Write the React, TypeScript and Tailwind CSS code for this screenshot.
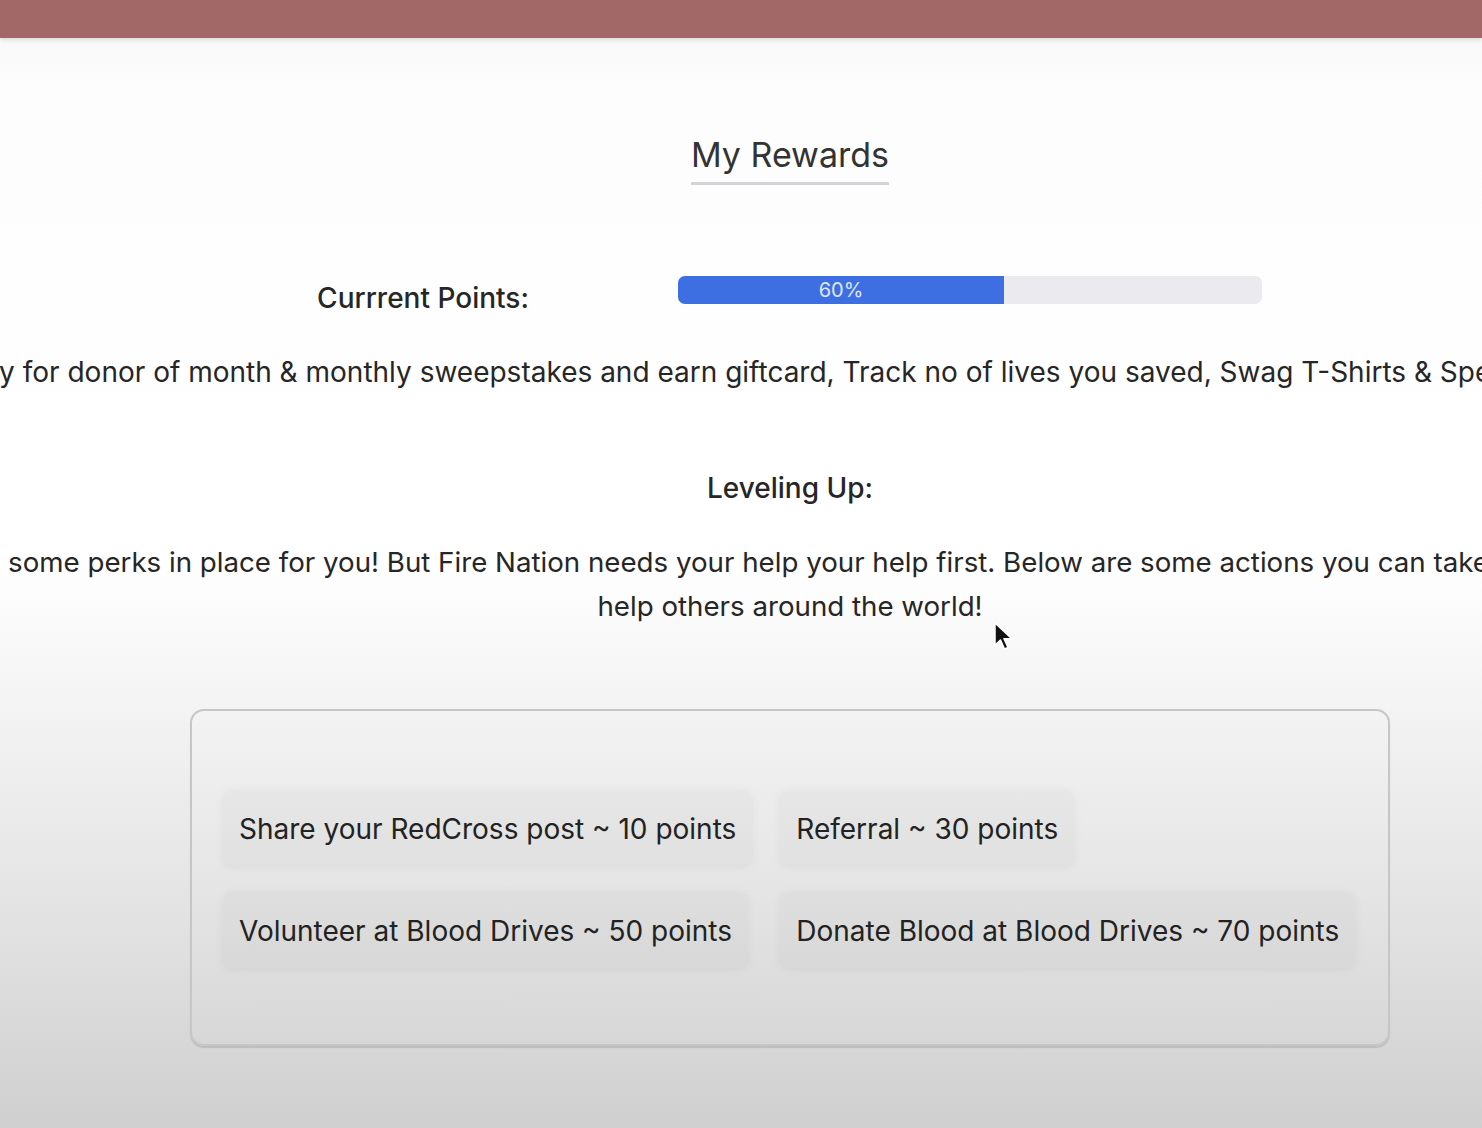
import React from "react";

const actions = [
  "Share your RedCross post ~ 10 points",
  "Referral ~ 30 points",
  "Volunteer at Blood Drives ~ 50 points",
  "Donate Blood at Blood Drives ~ 70 points",
];

const Cursor = () => (
  <svg width="22" height="30" viewBox="0 0 22 30" className="absolute left-[993px] top-[622px]">
    <path d="M2 1 L2 23 L7.5 18 L11.5 27 L15 25.5 L11 16.8 L18.5 16.5 Z" fill="#111" stroke="#fff" strokeWidth="1.5" strokeLinejoin="round" />
  </svg>
);

export default function App() {
  return (
    <div className="relative w-full h-[1128px] overflow-hidden flex flex-col bg-[linear-gradient(to_bottom,#f5f5f5_0px,#fdfdfd_90px,#ffffff_560px,#e4e4e4_900px,#cfcfcf_1128px)] font-['Inter','Noto_Sans',sans-serif] text-[#262626]">
      <div className="h-[38px] shrink-0 bg-[#a16867] shadow-[0_2px_4px_rgba(0,0,0,0.12)]" />

      <div className="w-[1200px] ml-[190px] shrink-0 flex flex-col items-center">
        <h1 className="mt-[96px] text-[34px] leading-[42px] text-[#333] pb-[6px] border-b-[3px] border-[#d4d4d8]">
          My Rewards
        </h1>

        <div className="mt-[76px] w-full flex items-center">
          <div className="w-[466px] text-center text-[28px] font-medium pt-[16px]">Currrent Points:</div>
          <div className="ml-[22px] w-[584px] h-[28px] rounded-[7px] bg-[#ebebef] overflow-hidden flex">
            <div className="w-[326px] h-full bg-[#3d6fe3] flex items-center justify-center text-[20px] text-[#dfe7fb]">
              60%
            </div>
          </div>
        </div>

        <div className="mt-[33px] w-full flex justify-center">
          <p className="whitespace-nowrap text-[28px] leading-[40px] shrink-0">
            Qualify for donor of month &amp; monthly sweepstakes and earn giftcard, Track no of lives you saved, Swag T-Shirts &amp; Special Rewards
          </p>
        </div>

        <div className="mt-[76px] text-[28px] font-medium leading-[40px]">Leveling Up:</div>

        <div className="mt-[32px] w-full flex justify-center">
          <p className="whitespace-nowrap text-center text-[27.7px] leading-[44px] shrink-0">
            We do have some perks in place for you! But Fire Nation needs your help your help first. Below are some actions you can take to earn points and
            <br />
            help others around the world!
          </p>
        </div>

        <div className="mt-[81px] w-full h-[337px] rounded-[14px] border-2 border-[#c6c6c6] shadow-[0_2px_1px_rgba(0,0,0,0.12)] px-[30px] pt-[79px]">
          <div className="grid grid-cols-[auto_auto] justify-start justify-items-start gap-x-[26px] gap-y-[24px]">
            {actions.map((a) => (
              <div
                key={a}
                className="h-[78px] px-[17px] flex items-center rounded-[10px] bg-black/[0.025] shadow-[0_0_10px_rgba(0,0,0,0.04)] text-[28px] text-[#222]"
              >
                {a}
              </div>
            ))}
          </div>
        </div>
      </div>

      <Cursor />
    </div>
  );
}
